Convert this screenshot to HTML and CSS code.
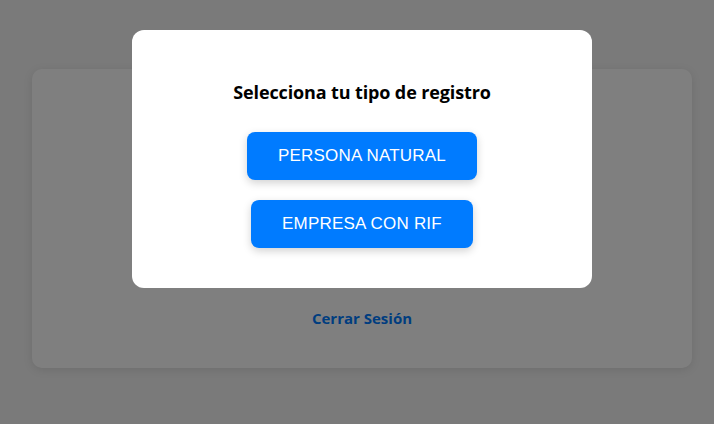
FILE: index.html
```html
<!DOCTYPE html>
<html lang="es">
<head>
<meta charset="utf-8">
<title>Registro</title>
<link rel="stylesheet" href="styles.css">
</head>
<body>
<div class="page">
  <div class="card">
    <a class="logout" href="#">Cerrar Sesión</a>
  </div>
</div>
<div class="overlay">
  <div class="modal">
    <h3 class="modal-title">Selecciona tu tipo de registro</h3>
    <div class="options">
      <button class="btn">PERSONA NATURAL</button>
      <button class="btn">EMPRESA CON RIF</button>
    </div>
  </div>
</div>
</body>
</html>
```

FILE: styles.css
```css
html, body {
  margin: 0;
  height: 100%;
}
body {
  background: #f4f4f4;
  font-family: "Open Sans", Lato, sans-serif;
  overflow: hidden;
}
.page {
  padding: 69px 22px 0 32px;
}
.card {
  background: #ffffff;
  border-radius: 10px;
  box-shadow: 0 2px 10px rgba(0, 0, 0, 0.1);
  height: 299px;
  box-sizing: border-box;
  display: flex;
  flex-direction: column;
  align-items: center;
  justify-content: flex-end;
  padding-bottom: 40px;
}
.logout {
  color: #007bff;
  font-weight: 700;
  font-size: 15px;
  line-height: 20px;
  text-decoration: none;
}
.overlay {
  position: fixed;
  inset: 0;
  background: rgba(0, 0, 0, 0.5);
  display: flex;
  justify-content: center;
  align-items: flex-start;
  padding: 30px 0 0 10px;
}
.modal {
  width: 460px;
  height: 258px;
  box-sizing: border-box;
  background: #ffffff;
  border-radius: 12px;
  padding: 30px 20px 40px;
  display: flex;
  flex-direction: column;
  align-items: center;
}
.modal-title {
  margin: 21px 0 29px;
  font-size: 18px;
  line-height: 22px;
  font-weight: 700;
  letter-spacing: -0.13px;
  color: #000000;
}
.options {
  display: flex;
  flex-direction: column;
  align-items: center;
  gap: 20px;
}
.btn {
  height: 48px;
  padding: 0 31px;
  border: none;
  border-radius: 8px;
  background: #007bff;
  color: #ffffff;
  font-family: "Liberation Sans", Arial, sans-serif;
  font-size: 17px;
  letter-spacing: 0.2px;
  box-shadow: 0 3px 8px rgba(0, 0, 0, 0.18);
  cursor: pointer;
}
```
